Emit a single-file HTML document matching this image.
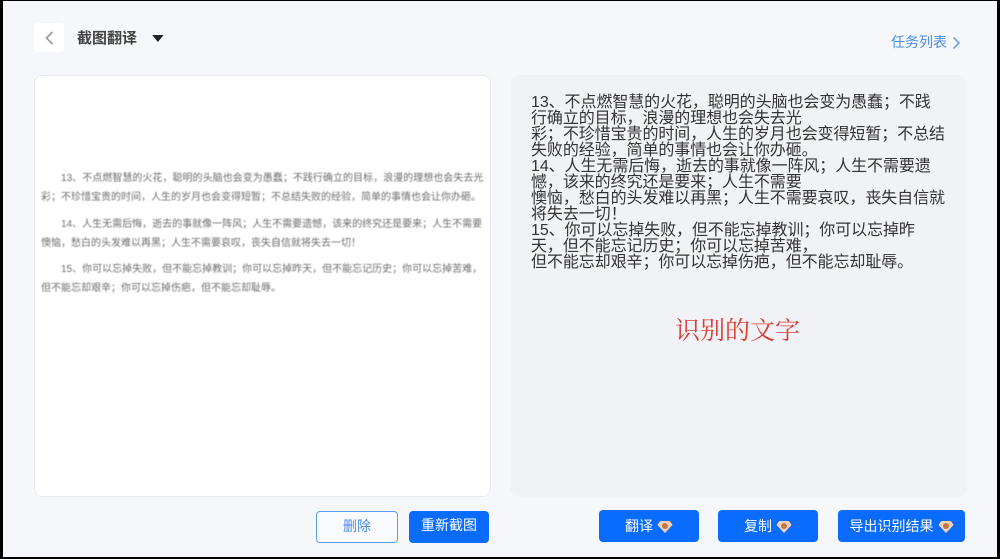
<!DOCTYPE html>
<html lang="zh">
<head>
<meta charset="utf-8">
<style>
html,body{margin:0;padding:0;width:1000px;height:559px;overflow:hidden;background:#000;}
body{position:relative;font-family:"Liberation Sans","Noto Sans CJK SC",sans-serif;}
#page{position:absolute;left:3px;top:1px;width:994px;height:556px;background:#f5f7fa;overflow:hidden;}
.a{position:absolute;white-space:nowrap;}
.l{position:absolute;white-space:nowrap;font-size:10px;line-height:14px;color:#6e6e6e;filter:blur(.4px);}
.r{position:absolute;left:531px;white-space:nowrap;font-size:16px;line-height:16px;letter-spacing:-.08px;color:#333;filter:blur(.3px);}
.btn{position:absolute;box-sizing:border-box;border-radius:4px;background:#0a6cff;color:#fff;font-size:14px;text-align:center;white-space:nowrap;}
.d{display:inline-block;vertical-align:-3px;margin-left:4px;filter:blur(.3px);}
</style>
</head>
<body>
<div id="page"></div>
<div class="a" style="left:34px;top:23px;width:30px;height:29px;background:#fff;border-radius:4px;"></div>
<svg class="a" style="left:34px;top:23px" width="30" height="29"><path d="M18.5 9 L12.5 15 L18.5 21" fill="none" stroke="#9a9a9a" stroke-width="1.7"/></svg>
<div class="a" style="left:77px;top:29px;font-size:15px;line-height:20px;font-weight:700;color:#444;">截图翻译</div>
<svg class="a" style="left:152px;top:34px" width="12" height="9"><path d="M.2 1 H11.6 L5.9 8Z" fill="#222"/></svg>
<div class="a" style="left:891px;top:33px;font-size:14px;line-height:18px;color:#4a8ce8;">任务列表</div>
<svg class="a" style="left:951px;top:36px" width="11" height="14"><path d="M2.5 1.5 L8 7 L2.5 12.5" fill="none" stroke="#6ea3ee" stroke-width="1.6"/></svg>

<div class="a" style="left:34px;top:75px;width:457px;height:422px;box-sizing:border-box;background:#fff;border:1px solid #e8eaee;border-radius:8px;"></div>
<div class="a" style="left:510px;top:75px;width:457px;height:422px;background:#f1f2f6;border-radius:10px;"></div>

<div class="l" style="left:61px;top:172px;letter-spacing:.03px;">13、不点燃智慧的火花，聪明的头脑也会变为愚蠢；不践行确立的目标，浪漫的理想也会失去光</div>
<div class="l" style="left:41px;top:191px;">彩；不珍惜宝贵的时间，人生的岁月也会变得短暂；不总结失败的经验，简单的事情也会让你办砸。</div>
<div class="l" style="left:61px;top:218px;">14、人生无需后悔，逝去的事就像一阵风；人生不需要遗憾，该来的终究还是要来；人生不需要</div>
<div class="l" style="left:41px;top:237px;">懊恼，愁白的头发难以再黑；人生不需要哀叹，丧失自信就将失去一切！</div>
<div class="l" style="left:61px;top:263px;">15、你可以忘掉失败，但不能忘掉教训；你可以忘掉昨天，但不能忘记历史；你可以忘掉苦难，</div>
<div class="l" style="left:41px;top:282px;">但不能忘却艰辛；你可以忘掉伤疤，但不能忘却耻辱。</div>

<div class="r" style="top:95px;">13、不点燃智慧的火花，聪明的头脑也会变为愚蠢；不践</div>
<div class="r" style="top:111px;">行确立的目标，浪漫的理想也会失去光</div>
<div class="r" style="top:127px;">彩；不珍惜宝贵的时间，人生的岁月也会变得短暂；不总结</div>
<div class="r" style="top:143px;">失败的经验，简单的事情也会让你办砸。</div>
<div class="r" style="top:159px;">14、人生无需后悔，逝去的事就像一阵风；人生不需要遗</div>
<div class="r" style="top:175px;">憾，该来的终究还是要来；人生不需要</div>
<div class="r" style="top:191px;">懊恼，愁白的头发难以再黑；人生不需要哀叹，丧失自信就</div>
<div class="r" style="top:207px;">将失去一切！</div>
<div class="r" style="top:223px;">15、你可以忘掉失败，但不能忘掉教训；你可以忘掉昨</div>
<div class="r" style="top:239px;">天，但不能忘记历史；你可以忘掉苦难，</div>
<div class="r" style="top:255px;">但不能忘却艰辛；你可以忘掉伤疤，但不能忘却耻辱。</div>

<div class="a" style="left:675px;top:318px;font-family:'Liberation Serif','Noto Serif CJK SC',serif;font-size:25px;line-height:28px;color:#dc3f38;">识别的文字</div>

<div class="btn" style="left:316px;top:511px;width:82px;height:32px;background:#f8fafd;border:1px solid #5b9bf0;color:#4a8ae8;line-height:29px;">删除</div>
<div class="btn" style="left:409px;top:511px;width:80px;height:32px;line-height:29px;">重新截图</div>
<div class="btn" style="left:599px;top:510px;width:100px;height:32px;line-height:32px;">翻译<svg class="d" width="16" height="14"><path d="M4 1 H12 Q13 1 14 2.5 L15.5 5 L8 13 L.5 5 L2 2.5 Q3 1 4 1Z" fill="#f8d2b8"/><circle cx="8" cy="6" r="3" fill="#c07848"/></svg></div>
<div class="btn" style="left:718px;top:510px;width:100px;height:32px;line-height:32px;">复制<svg class="d" width="16" height="14"><path d="M4 1 H12 Q13 1 14 2.5 L15.5 5 L8 13 L.5 5 L2 2.5 Q3 1 4 1Z" fill="#f8d2b8"/><circle cx="8" cy="6" r="3" fill="#c07848"/></svg></div>
<div class="btn" style="left:838px;top:510px;width:127px;height:32px;line-height:32px;">导出识别结果<svg class="d" width="16" height="14"><path d="M4 1 H12 Q13 1 14 2.5 L15.5 5 L8 13 L.5 5 L2 2.5 Q3 1 4 1Z" fill="#f8d2b8"/><circle cx="8" cy="6" r="3" fill="#c07848"/></svg></div>
</body>
</html>
